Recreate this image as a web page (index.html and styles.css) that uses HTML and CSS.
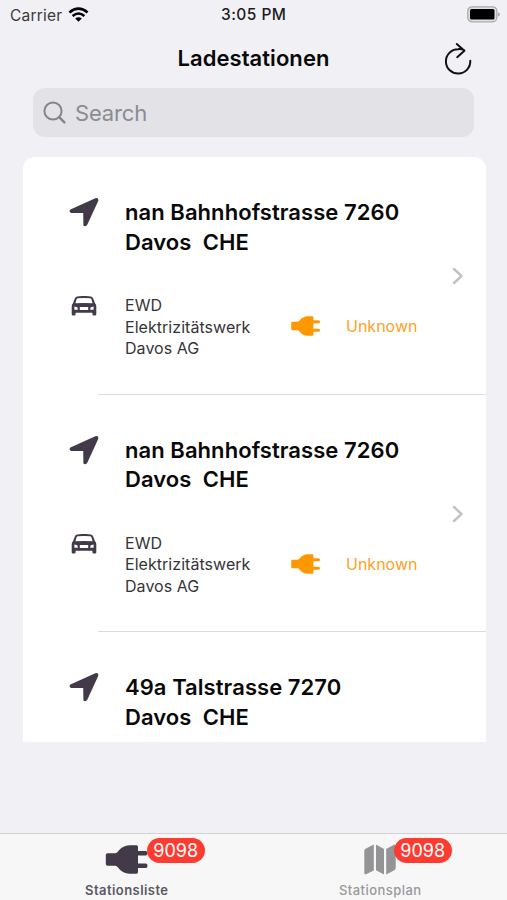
FILE: index.html
```html
<!DOCTYPE html>
<html lang="de">
<head>
<meta charset="utf-8">
<title>Ladestationen</title>
<link rel="stylesheet" href="styles.css">
</head>
<body>
<svg class="defs" width="0" height="0" aria-hidden="true">
  <symbol id="arrow" viewBox="0 0 30 30"><path d="M1.4 12.6 26.3 1.2Q30 .3 29.2 4L18.4 27.6Q16.8 30.2 14.4 28.5L14.2 16H2.3Q-.6 14.6 1.4 12.6Z"/></symbol>
  <symbol id="car" viewBox="0 0 26 20"><path fill-rule="evenodd" d="M6 .5Q13-.6 20 .5 21.6.8 22.2 2.5L24 7.3Q25.3 8.4 25.3 10.3V18.3Q25.3 19.5 24.1 19.5H22.6Q21.4 19.5 21.4 18.3V16.8H4.6V18.3Q4.6 19.5 3.4 19.5H1.9Q.7 19.5.7 18.3V10.3Q.7 8.4 2 7.3L3.8 2.5Q4.4.8 6 .5ZM6.5 2.3 5.7 3 4.4 7.3Q13 6.7 21.6 7.3L20.3 3 19.5 2.3Q13 1.5 6.5 2.3ZM3.4 10.6V13.7H6.9L6.3 11.3ZM8.8 10.9V14H17.2V10.9ZM22.6 10.6 19.7 11.3 19.1 13.7H22.6Z"/></symbol>
  <symbol id="plug" viewBox="0 0 42 29"><path d="M2 8.2H9.2Q11 8.2 12 7 17 .3 24 .3H31Q32.5.3 32.5 2V6H40.2Q42 6 42 8.2T40.2 10.4H32.5V18.6H40.2Q42 18.6 42 20.8T40.2 23H32.5V27Q32.5 28.7 31 28.7H24Q17 28.7 12 22 11 20.8 9.2 20.8H2Q.3 20.8.3 19V10Q.3 8.2 2 8.2Z"/></symbol>
  <symbol id="chevron" viewBox="0 0 12 18"><path d="m2 2 7.5 7L2 16" fill="none" stroke="#c2c2c5" stroke-width="2.4" stroke-linecap="round" stroke-linejoin="round"/></symbol>
</svg>
<div class="screen">
  <header>
    <div class="status">
      <div class="carrier"><span>Carrier</span>
        <svg width="21" height="16" viewBox="0 0 21 16" fill="none" stroke="#000" stroke-width="2.6"><path d="M1.4 5.5Q10.5-2.2 19.6 5.5M4.6 9Q10.5 4 16.4 9"/><path d="M7.2 11.4Q10.5 8.9 13.8 11.4L10.5 14.8Z" fill="#000" stroke="none"/></svg>
      </div>
      <span class="time">3:05 PM</span>
      <svg class="battery" width="33" height="17" viewBox="0 0 33 17"><rect x=".8" y=".8" width="29" height="15" rx="4.2" fill="#e1e1e3" stroke="#aaaaac" stroke-width="1.3"/><rect x="3" y="3" width="24.5" height="10.6" rx="1.5"/><path d="M31 6.2Q33 7 33 8.3T31 10.4Z" fill="#aaa"/></svg>
    </div>
    <div class="nav">
      <h1>Ladestationen</h1>
      <svg class="refresh" width="28" height="34" viewBox="0 0 28 34" fill="none" stroke="#111" stroke-width="2" stroke-linecap="round" stroke-linejoin="round"><path d="M26.3 18.8A12.2 12.2 0 1 1 14 7.2Q17 6.8 20.2 8.2M12.8 2 20.4 8.8 13.2 15.2"/></svg>
    </div>
    <div class="search">
      <svg width="24" height="24" viewBox="0 0 24 24" fill="none" stroke="#858589" stroke-width="2" stroke-linecap="round"><circle cx="10" cy="10" r="8.6"/><path d="m16.4 16.4 5 5" stroke-width="2.4"/></svg>
      <span>Search</span>
    </div>
  </header>
  <main>
    <article class="station">
      <svg class="arrow"><use href="#arrow"/></svg>
      <h2>nan Bahnhofstrasse 7260<br>Davos&nbsp; CHE</h2>
      <svg class="car"><use href="#car"/></svg>
      <p>EWD<br>Elektrizitätswerk<br>Davos AG</p>
      <svg class="plug"><use href="#plug"/></svg>
      <span class="state">Unknown</span>
      <svg class="chevron"><use href="#chevron"/></svg>
    </article>
    <article class="station">
      <svg class="arrow"><use href="#arrow"/></svg>
      <h2>nan Bahnhofstrasse 7260<br>Davos&nbsp; CHE</h2>
      <svg class="car"><use href="#car"/></svg>
      <p>EWD<br>Elektrizitätswerk<br>Davos AG</p>
      <svg class="plug"><use href="#plug"/></svg>
      <span class="state">Unknown</span>
      <svg class="chevron"><use href="#chevron"/></svg>
    </article>
    <article class="station partial">
      <svg class="arrow"><use href="#arrow"/></svg>
      <h2>49a Talstrasse 7270<br>Davos&nbsp; CHE</h2>
    </article>
  </main>
  <nav class="tabs">
    <div class="tab active">
      <div class="tab-icon"><svg width="43" height="29"><use href="#plug"/></svg><span class="badge">9098</span></div>
      <span class="label">Stationsliste</span>
    </div>
    <div class="tab">
      <div class="tab-icon"><svg width="32" height="31" viewBox="0 0 32 31"><path d="M2 4.5 9.8.4V26.5L2 30.2Q.3 30.8.3 29V7Q.3 5.3 2 4.5ZM12 .5 20 5V30.5L12 26.2ZM22.2 5 30 .8Q31.7.2 31.7 2V24Q31.7 25.5 30.3 26.2L22.2 30.5Z"/></svg><span class="badge">9098</span></div>
      <span class="label">Stationsplan</span>
    </div>
  </nav>
</div>
</body>
</html>
```

FILE: styles.css
```css
* { box-sizing: border-box; }
body { margin: 0; background: #f1f0f5; color: #090909; font-family: Inter, "Liberation Sans", sans-serif; }
.defs { position: absolute; }
.screen { width: 507px; height: 900px; display: flex; flex-direction: column; overflow: hidden; }
header { height: 157px; flex: none; }
.status { height: 30px; padding: 0 7px 0 10px; display: grid; grid-template-columns: 211px auto 1fr; align-items: center; font-size: 15.5px; }
.carrier { display: flex; align-items: center; gap: 6px; color: #39393c; letter-spacing: .2px; }
.carrier svg { margin-top: -1px; }
.time { font-weight: 500; font-size: 15.5px; letter-spacing: .45px; color: #1c1c1f; margin-top: -1px; }
.battery { justify-self: end; margin-top: -2px; }
.nav { height: 58px; padding: 0 35px; display: grid; grid-template-columns: 28px 1fr 28px; align-items: center; }
h1 { grid-column: 2; margin: -2px 0 0; text-align: center; font-size: 22px; line-height: 30px; font-weight: 600; letter-spacing: .05px; white-space: nowrap; }
.refresh { margin-top: -1px; }
.search { height: 49px; margin: 0 33px; padding: 0 10px; display: flex; align-items: center; gap: 8px; border-radius: 12px; background: #e3e2e7; color: #8b8b90; font-size: 22px; letter-spacing: -.15px; }
main { width: 463px; height: 585px; margin-left: 23px; background: #fff; border-radius: 12px 12px 0 0; overflow: hidden; flex: none; }
.station { position: relative; height: 237.6px; padding: 41px 0 0 46px; display: grid; grid-template-columns: 56px 166px 55px 150px; grid-template-rows: 60px 65px; row-gap: 37px; }
.station:not(.partial)::after { content: ""; position: absolute; left: 75px; right: 0; bottom: 0; height: 1px; background: #dcdcdf; }
h2 { grid-column: 2 / 5; margin: 0; font-size: 22px; line-height: 29.7px; font-weight: 600; letter-spacing: .06px; white-space: nowrap; }
p { margin: 0; font-size: 16px; line-height: 21.7px; letter-spacing: .04px; color: #353537; white-space: nowrap; }
.arrow, .car { fill: #433a49; }
.arrow { width: 30px; height: 30px; margin-top: -1px; }
.car { width: 26px; height: 20px; margin: 1px 0 0 2px; }
.plug { width: 29px; height: 20px; fill: #ff9800; align-self: center; margin-top: -3px; }
.state { align-self: center; color: #ffa126; font-size: 16px; margin-top: -3px; }
.chevron { position: absolute; width: 12px; height: 18px; right: 22px; top: 110px; }
.tabs { height: 67px; margin-top: auto; border-top: 1px solid #d2d2d5; background: #f7f7f8; display: grid; grid-template-columns: 1fr 1fr; }
.tab { display: flex; flex-direction: column; align-items: center; color: #99999b; fill: #949496; }
.active { color: #5c5761; fill: #433a49; }
.tab-icon { position: relative; height: 47px; padding-top: 10px; }
.tab-icon svg { display: block; }
.active .tab-icon svg { margin-top: 1px; }
.badge { position: absolute; left: 29.5px; top: 3.5px; width: 58px; height: 25px; border-radius: 13px; background: #fd3b30; color: #fff; font-size: 18px; line-height: 26px; text-align: center; }
.active .badge { left: 41.5px; }
.label { font-size: 13px; line-height: 18px; font-weight: 500; letter-spacing: .45px; }
.active .label { font-weight: 600; }
```
